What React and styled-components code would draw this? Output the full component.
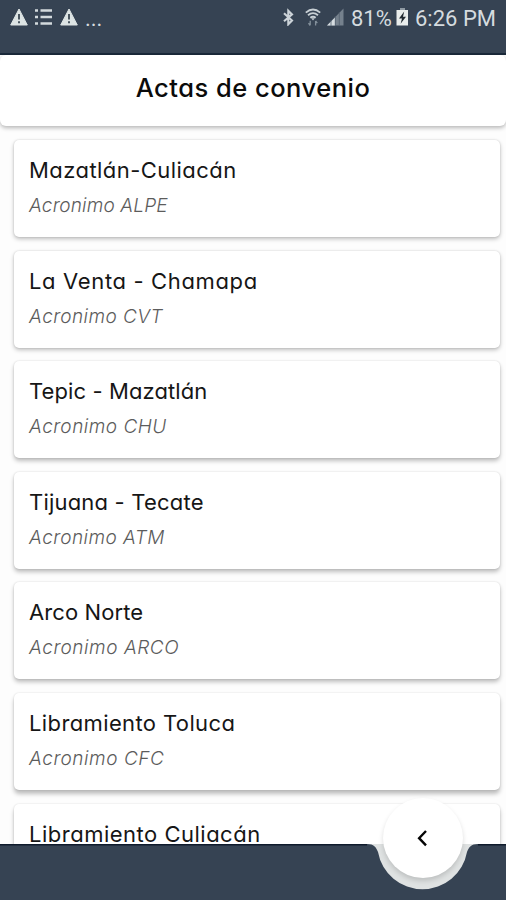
import styled, { createGlobalStyle } from "styled-components";

const GlobalStyle = createGlobalStyle`
  * {
    box-sizing: border-box;
  }

  body {
    margin: 0;
    overflow: hidden;
    background-color: #fdfdfd;
    font-family: Inter, "Open Sans", sans-serif;
    font-feature-settings: "cv11", "ss03";
  }
`;

const Screen = styled.div`
  display: flex;
  flex-direction: column;
  width: 506px;
  height: 900px;
  overflow: hidden;
`;

const StatusBar = styled.header`
  flex-shrink: 0;
  display: flex;
  align-items: flex-start;
  justify-content: space-between;
  height: 55px;
  padding: 7px 11px 0 10px;
  background-color: #364353;
  border-bottom: 2px solid #1a293a;
  color: #d5dbdf;
  font-family: Roboto, sans-serif;
  font-size: 22px;
  line-height: 24px;
`;

const StatusGroup = styled.div`
  display: flex;
  align-items: flex-start;
  gap: ${({ $gap }) => $gap}px;

  svg {
    display: block;
    flex-shrink: 0;
    margin-top: 1px;
  }
`;

const StatusText = styled.span`
  width: ${({ $width }) => $width}px;
  white-space: nowrap;
`;

const TitleBar = styled.div`
  position: relative;
  flex-shrink: 0;
  display: flex;
  justify-content: center;
  height: 71px;
  padding-top: 17px;
  background-color: #fff;
  border-radius: 6px;
  box-shadow: 0 2px 4px rgba(0, 0, 0, 0.28);
`;

const Title = styled.h1`
  margin: 0;
  font-size: 25.5px;
  font-weight: 500;
  line-height: 32px;
  letter-spacing: 0.5px;
  color: #0b0b0b;
  white-space: nowrap;
`;

const List = styled.main`
  flex: 1;
  min-height: 0;
  display: flex;
  flex-direction: column;
  gap: 13.6px;
  padding: 14px 6px 0 14px;
  overflow: hidden;
`;

const Card = styled.article`
  flex-shrink: 0;
  height: 97px;
  padding: 16px 15px;
  background-color: #fff;
  border-radius: 5px;
  box-shadow: 0 ${({ $depth }) => $depth}px 4px rgba(0, 0, 0, 0.25), 0 0 2px rgba(0, 0, 0, 0.14);
`;

const CardName = styled.h2`
  margin: 0;
  font-size: 22px;
  font-weight: 400;
  line-height: 29px;
  letter-spacing: ${({ $spacing }) => $spacing}px;
  color: #161616;
  white-space: nowrap;
`;

const CardAcronym = styled.p`
  margin: 8px 0 0;
  font-size: 19px;
  font-style: italic;
  font-weight: 300;
  line-height: 25px;
  letter-spacing: ${({ $spacing }) => $spacing}px;
  color: #5c5c5c;
  white-space: nowrap;
`;

const BottomBar = styled.footer`
  position: relative;
  flex-shrink: 0;
  height: 56px;

  > svg {
    display: block;
  }
`;

const BackButton = styled.button`
  position: absolute;
  top: -46px;
  left: 383px;
  display: flex;
  align-items: center;
  justify-content: center;
  width: 80px;
  height: 80px;
  padding: 0;
  border: 0;
  border-radius: 50%;
  background-color: #fff;
  box-shadow: 0 3px 5px rgba(0, 0, 0, 0.15);
`;

const WarningIcon = () => (
  <svg width="18" height="18" viewBox="0 0 18 18">
    <path d="M9 1 17.3 17H.7Z" fill="#dde4e4" stroke="#dde4e4" strokeLinejoin="round" />
    <path d="M9 6v5.5M9 13.2v2" stroke="#4a5660" strokeWidth="2" />
  </svg>
);

const ListIcon = () => (
  <svg width="18" height="18" viewBox="0 0 18 18">
    <path d="M0 2.5h3M0 9h3M0 15.5h3M5.5 2.5H17M5.5 9H17M5.5 15.5H17" stroke="#d3dadd" strokeWidth="2.6" />
  </svg>
);

const BluetoothIcon = () => (
  <svg width="18" height="18" viewBox="0 0 18 18">
    <path d="M3 5.2 11 12.6 7.3 16.3V2.7L11 6.4 3 13.2" fill="none" stroke="#ccd3d8" strokeWidth="2.1" />
  </svg>
);

const WifiIcon = () => (
  <svg width="16" height="19" viewBox="0 0 16 19">
    <g fill="none" stroke="#c7cfd4" strokeWidth="1.8">
      <path d="M.8 4.6Q8-1.6 15.2 4.6" />
      <path d="M3 7.3Q8 3 13 7.3" />
      <path d="M5.3 9.8Q8 7.6 10.7 9.8" />
    </g>
    <path d="M6.2 10.2h3.6L8 12.6Z" fill="#c7cfd4" />
    <path d="M5.2 12.8v4.5M3.5 15.2l1.7 2.3M10.6 17.5V13M12.3 15.2 10.6 13" fill="none" stroke="#83909b" strokeWidth="1.3" />
  </svg>
);

const SignalIcon = () => (
  <svg width="18" height="18" viewBox="0 0 18 18">
    <path d="M16.5.5v17H0Z" fill="#75818d" />
    <path d="M8 9.5v8H0Z" fill="#d5dce0" />
    <path d="M4 12v6M8.3 8v10M12.3 4v14" stroke="#52606e" strokeWidth=".8" />
  </svg>
);

const BatteryIcon = () => (
  <svg width="13" height="19" viewBox="0 0 13 19">
    <path d="M4 0h5v2H4Z" fill="#8f9aa3" />
    <path d="M.5 2h11.5v15.5H.5Z" fill="#e9edec" />
    <path d="M8.2 3.5 3 10.4h3l-1.4 5.3 5.4-7H7Z" fill="#222b32" />
  </svg>
);

const ChevronIcon = () => (
  <svg width="12" height="18" viewBox="0 0 12 18">
    <path d="M9 2 2.1 9.2 9 16.4" fill="none" stroke="#050505" strokeWidth="2.4" />
  </svg>
);

const NotchedBar = () => (
  <svg width="506" height="56" viewBox="0 0 506 56">
    <path d="M366 0H479V20L460 46H385L370 20Z" fill="#dfe2e2" />
    <path
      d="M0 0H367C374 0 376 3 378 8A45.2 45.2 0 0 0 467 8C469 3 471 0 478 0H506V56H0Z"
      fill="#364353"
    />
    <path d="M0 .8H367M478 .8H506" stroke="#0f1b2c" strokeWidth="1.6" />
  </svg>
);

const agreements = [
  { name: "Mazatlán-Culiacán", acronym: "ALPE", depth: 2, nameSpacing: 0.45, acronymSpacing: 0.15 },
  { name: "La Venta - Chamapa", acronym: "CVT", depth: 2, nameSpacing: 0.65, acronymSpacing: 0.45 },
  { name: "Tepic - Mazatlán", acronym: "CHU", depth: 3, nameSpacing: 0.1, acronymSpacing: 0.5 },
  { name: "Tijuana - Tecate", acronym: "ATM", depth: 3, nameSpacing: 0.2, acronymSpacing: 0.45 },
  { name: "Arco Norte", acronym: "ARCO", depth: 3, nameSpacing: 0.1, acronymSpacing: 0.55 },
  { name: "Libramiento Toluca", acronym: "CFC", depth: 4, nameSpacing: 0.38, acronymSpacing: 0.55 },
  { name: "Libramiento Culiacán", depth: 4, nameSpacing: 0.5 },
];

const App = () => (
  <Screen>
    <GlobalStyle />
    <StatusBar>
      <StatusGroup $gap={7}>
        <WarningIcon />
        <ListIcon />
        <WarningIcon />
        <StatusText $width={20}>...</StatusText>
      </StatusGroup>
      <StatusGroup $gap={6}>
        <BluetoothIcon />
        <WifiIcon />
        <SignalIcon />
        <StatusText $width={39}>81%</StatusText>
        <BatteryIcon />
        <StatusText $width={80}>6:26 PM</StatusText>
      </StatusGroup>
    </StatusBar>
    <TitleBar>
      <Title>Actas de convenio</Title>
    </TitleBar>
    <List>
      {agreements.map(({ name, acronym, depth, nameSpacing, acronymSpacing }) => (
        <Card key={name} $depth={depth}>
          <CardName $spacing={nameSpacing}>{name}</CardName>
          {acronym && <CardAcronym $spacing={acronymSpacing}>Acronimo {acronym}</CardAcronym>}
        </Card>
      ))}
    </List>
    <BottomBar>
      <NotchedBar />
      <BackButton aria-label="Regresar">
        <ChevronIcon />
      </BackButton>
    </BottomBar>
  </Screen>
);

export default App;
